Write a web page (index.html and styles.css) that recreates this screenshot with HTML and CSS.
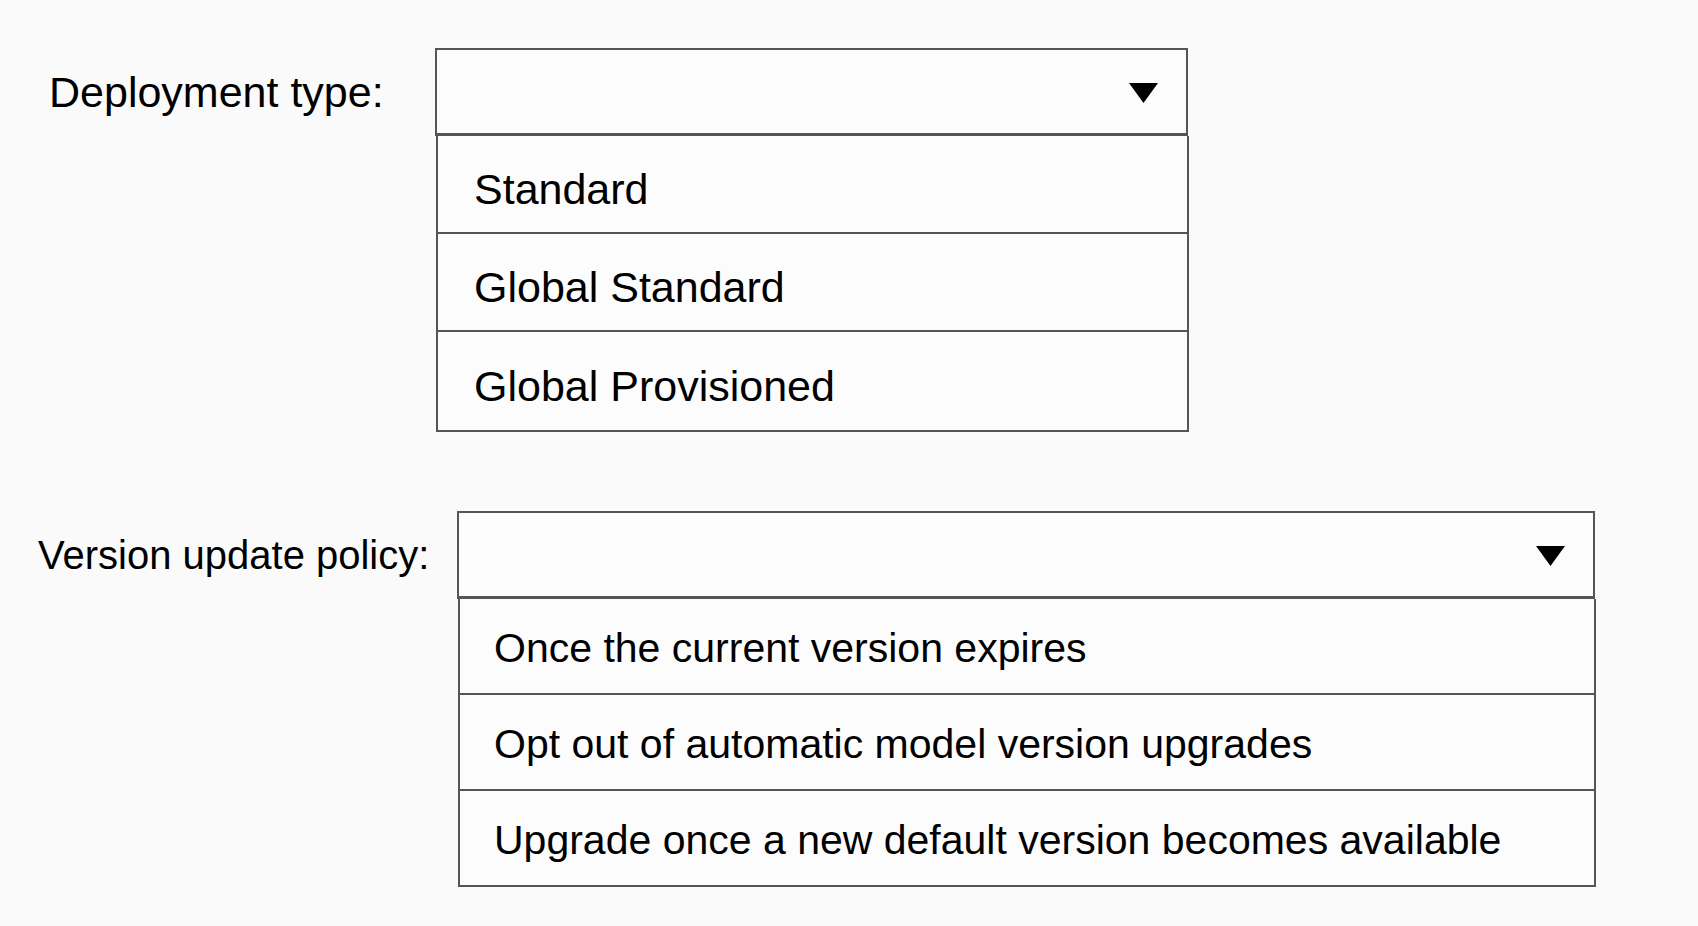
FILE: index.html
```html
<!DOCTYPE html>
<html lang="en">
<head>
    <meta charset="UTF-8">
    <meta name="viewport" content="width=device-width, initial-scale=1.0">
    <title>Deployment settings</title>
    <link rel="stylesheet" href="styles.css">
</head>
<body>
    <form class="settings">
        <div class="field field--type">
            <label class="field-label">Deployment type:</label>
            <div class="select">
                <div class="select-head">
                    <svg class="caret" width="29" height="20" viewBox="0 0 29 20"><polygon points="0,0 29,0 14.5,20" fill="#000"/></svg>
                </div>
                <ul class="options">
                    <li class="option">Standard</li>
                    <li class="option">Global Standard</li>
                    <li class="option">Global Provisioned</li>
                </ul>
            </div>
        </div>

        <div class="field field--policy">
            <label class="field-label">Version update policy:</label>
            <div class="select">
                <div class="select-head">
                    <svg class="caret" width="29" height="20" viewBox="0 0 29 20"><polygon points="0,0 29,0 14.5,20" fill="#000"/></svg>
                </div>
                <ul class="options">
                    <li class="option">Once the current version expires</li>
                    <li class="option">Opt out of automatic model version upgrades</li>
                    <li class="option">Upgrade once a new default version becomes available</li>
                </ul>
            </div>
        </div>
    </form>
</body>
</html>
```

FILE: styles.css
```css
* {
    box-sizing: border-box;
    margin: 0;
    padding: 0;
}

body {
    font-family: 'Liberation Sans', Arial, sans-serif;
    background-color: #fafafa;
    color: #000;
}

.settings {
    display: flex;
    flex-direction: column;
    gap: 79px;
    padding-top: 48px;
}

.field {
    display: flex;
    align-items: flex-start;
}

.field-label {
    display: flex;
    align-items: center;
    height: 88px;
    white-space: nowrap;
}

.field--type .field-label {
    width: 435px;
    padding-left: 49px;
    font-size: 43px;
}

.field--policy .field-label {
    width: 457px;
    padding-left: 38px;
    font-size: 40px;
}

.field--type .select {
    width: 754px;
}

.field--policy .select {
    width: 1139px;
}

.select-head {
    display: flex;
    justify-content: flex-end;
    align-items: center;
    height: 88px;
    margin-right: 1px;
    padding-right: 28px;
    background-color: #fcfcfc;
    border: 2px solid #555;
    border-bottom-width: 3px;
}

.caret {
    margin-top: 2px;
}

.options {
    list-style: none;
    margin-left: 1px;
    background-color: #fcfcfc;
    border: 2px solid #555;
    border-top: none;
}

.option {
    display: flex;
    align-items: center;
    height: 98px;
    padding: 10px 0 0 36px;
    font-size: 43px;
    white-space: nowrap;
    border-bottom: 2px solid #555;
}

.option:last-child {
    border-bottom: none;
}

.field--policy .option {
    height: 96px;
    padding: 4px 0 0 34px;
    font-size: 41px;
}

.field--policy .option:last-child {
    height: 94px;
}
```
